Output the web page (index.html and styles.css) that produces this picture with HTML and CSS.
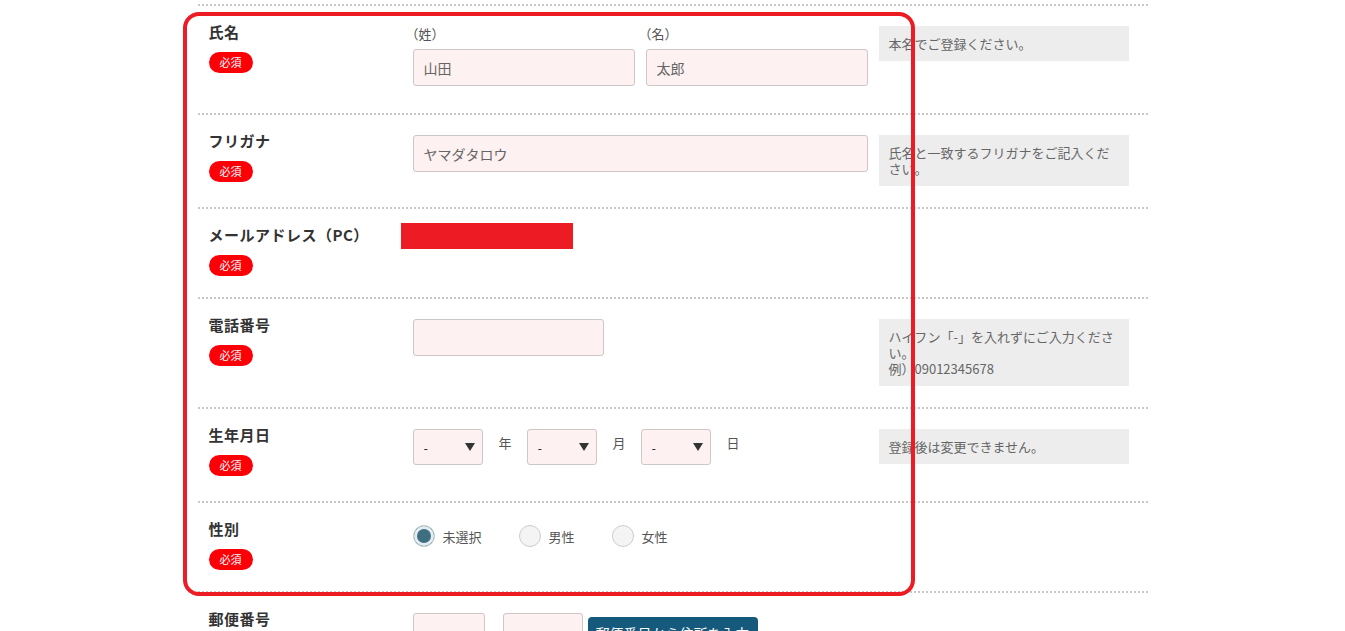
FILE: index.html
```html
<!DOCTYPE html>
<html lang="ja">
<head>
    <meta charset="UTF-8">
    <meta name="viewport" content="width=device-width, initial-scale=1.0">
    <title>会員登録</title>
    <link rel="stylesheet" href="styles.css">
</head>
<body>
    <div class="form">
        <div class="row row-name">
            <div class="label"><p>氏名</p><span class="req">必須</span></div>
            <div class="field pair">
                <div class="sub">
                    <span class="sub-label">（姓）</span>
                    <input type="text" class="text" value="山田">
                </div>
                <div class="sub">
                    <span class="sub-label">（名）</span>
                    <input type="text" class="text" value="太郎">
                </div>
            </div>
            <div class="note">本名でご登録ください。</div>
        </div>

        <div class="row">
            <div class="label"><p>フリガナ</p><span class="req">必須</span></div>
            <div class="field">
                <input type="text" class="text" value="ヤマダタロウ">
            </div>
            <div class="note">氏名と一致するフリガナをご記入ください。</div>
        </div>

        <div class="row">
            <div class="label"><p>メールアドレス（PC）</p><span class="req">必須</span></div>
            <div class="field">
                <div class="redact"></div>
            </div>
        </div>

        <div class="row">
            <div class="label"><p>電話番号</p><span class="req">必須</span></div>
            <div class="field">
                <input type="text" class="text tel">
            </div>
            <div class="note">ハイフン「-」を入れずにご入力ください。<br>例）09012345678</div>
        </div>

        <div class="row row-birth">
            <div class="label"><p>生年月日</p><span class="req">必須</span></div>
            <div class="field date">
                <span class="select"><select><option>-</option></select></span>
                <span class="unit">年</span>
                <span class="select"><select><option>-</option></select></span>
                <span class="unit">月</span>
                <span class="select"><select><option>-</option></select></span>
                <span class="unit">日</span>
            </div>
            <div class="note">登録後は変更できません。</div>
        </div>

        <div class="row">
            <div class="label"><p>性別</p><span class="req">必須</span></div>
            <div class="field radios">
                <label><input type="radio" name="sex" checked>未選択</label>
                <label><input type="radio" name="sex">男性</label>
                <label><input type="radio" name="sex">女性</label>
            </div>
        </div>

        <div class="row">
            <div class="label"><p>郵便番号</p><span class="req">必須</span></div>
            <div class="field zip">
                <input type="text" class="text zip1">
                <input type="text" class="text zip2">
                <button type="button">郵便番号から住所を入力</button>
            </div>
        </div>

        <!-- annotation frame drawn over the first six rows -->
        <div class="marker"></div>
    </div>
</body>
</html>
```

FILE: styles.css
```css
body {
    margin: 0;
    padding: 0;
    background: #fff;
    color: #333;
    font-family: "Noto Sans CJK JP", "Noto Sans", sans-serif;
    overflow: hidden;
}

.form {
    position: relative;
    width: 950px;
    margin: 0 auto;
    padding-top: 4px;
}

.row {
    display: grid;
    grid-template-columns: 193px 455px 250px;
    column-gap: 11px;
    align-items: start;
    padding: 20px 19px 21px 11px;
    border-top: 2px dotted #c8c8c8;
}

.row-name {
    padding-bottom: 27px;
}

.row-birth {
    padding-bottom: 25px;
}

.label p {
    margin: -2px 0 0;
    font-size: 15px;
    line-height: 16px;
    font-weight: bold;
    letter-spacing: 0.5px;
    color: #333;
}

.req {
    display: inline-block;
    margin-top: 12px;
    width: 44px;
    height: 21px;
    line-height: 21px;
    border-radius: 11px;
    background: #fb0007;
    color: #fff;
    font-size: 11px;
    text-align: center;
}

.pair {
    display: flex;
    gap: 11px;
}

.sub {
    width: 222px;
}

.sub-label {
    display: block;
    margin: 0 0 7px -7px;
    font-size: 13px;
    line-height: 16px;
    color: #555;
}

.text {
    display: block;
    box-sizing: border-box;
    width: 100%;
    height: 37px;
    margin: 0;
    padding: 0 10px;
    border: 1px solid #cdc7c7;
    border-radius: 3px;
    background: #fdf1f1;
    color: #666;
    font-family: inherit;
    font-size: 14px;
}

.text.tel {
    width: 191px;
}

.note {
    padding: 10px 10px 9px;
    background: #ededed;
    color: #666;
    font-size: 13px;
    line-height: 16px;
}

.redact {
    width: 172px;
    height: 26px;
    margin: -6px 0 0 -12px;
    background: #ed1c24;
}

.date {
    display: flex;
    align-items: flex-start;
}

.select {
    position: relative;
    display: block;
    width: 70px;
    height: 36px;
}

.select select {
    appearance: none;
    -webkit-appearance: none;
    box-sizing: border-box;
    width: 100%;
    height: 100%;
    padding: 0 10px;
    border: 1px solid #cdc7c7;
    border-radius: 3px;
    background: #fdf1f1;
    color: #333;
    font-family: inherit;
    font-size: 13px;
}

.select::after {
    content: "";
    position: absolute;
    top: 14px;
    right: 8px;
    border-left: 5px solid transparent;
    border-right: 5px solid transparent;
    border-top: 8px solid #333;
    pointer-events: none;
}

.unit {
    margin: 0 15px 0 16px;
    font-size: 13px;
    line-height: 28px;
    color: #555;
}

.radios {
    display: flex;
    align-items: center;
    margin-top: 2px;
}

.radios label {
    display: flex;
    align-items: center;
    gap: 8px;
    margin-right: 37px;
    font-size: 13px;
    color: #555;
}

.radios input {
    appearance: none;
    -webkit-appearance: none;
    box-sizing: border-box;
    width: 22px;
    height: 22px;
    margin: 0;
    border: 1px solid #ccc;
    border-radius: 50%;
    background: #f4f4f4;
}

.radios input:checked {
    background: #3e6e80;
    box-shadow: inset 0 0 0 3px #e4ecef;
    border-color: #c8d2d6;
}

.zip {
    display: flex;
    align-items: flex-start;
}

.text.zip1 {
    width: 72px;
}

.text.zip2 {
    width: 80px;
    margin-left: 18px;
}

button {
    margin: 4px 0 0 5px;
    padding: 0 8px;
    height: 32px;
    border: none;
    border-radius: 4px;
    background: #155a7c;
    color: #fff;
    font-family: inherit;
    font-size: 14px;
    cursor: pointer;
}

.marker {
    position: absolute;
    left: -15px;
    top: 12px;
    width: 732px;
    height: 584px;
    box-sizing: border-box;
    border: 4px solid #ed1c24;
    border-radius: 16px;
    pointer-events: none;
}
```
